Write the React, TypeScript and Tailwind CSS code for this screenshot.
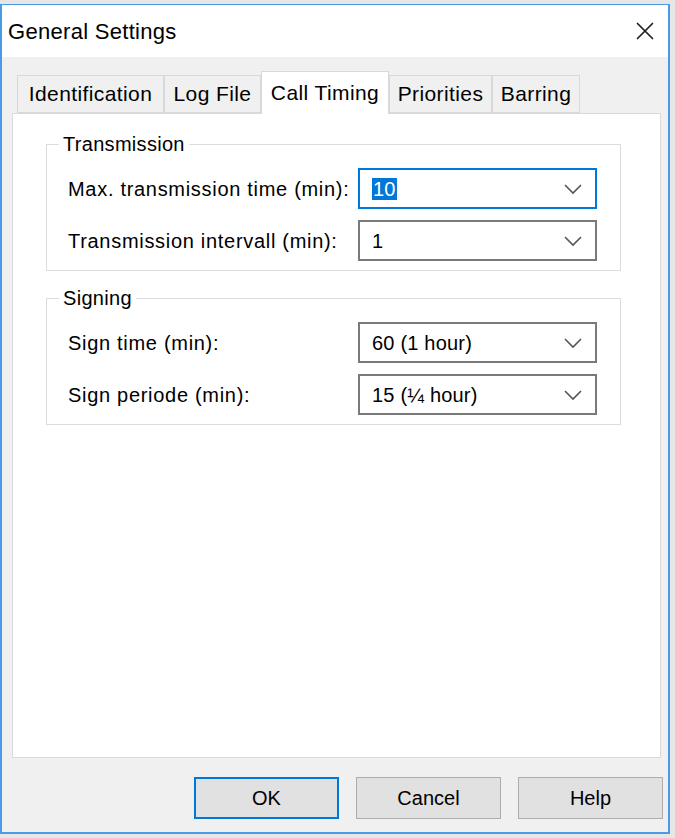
import { X } from 'lucide-react';

const font = { fontFamily: '"Liberation Sans", Arial, sans-serif' };

function Chevron() {
    return (
        <svg width="20" height="12" viewBox="0 0 20 12" className="shrink-0">
            <path d="M2 2 L10 10 L18 2" fill="none" stroke="#555" strokeWidth="1.6" />
        </svg>
    );
}

function Combo({ value, focused }: { value: string; focused?: boolean }) {
    return (
        <div
            className={
                focused
                    ? 'w-[239px] h-[41px] border-2 border-[#0078d7] bg-white flex items-center pl-[12px] pr-[12px]'
                    : 'w-[239px] h-[41px] border-2 border-[#7a7a7a] bg-white flex items-center pl-[12px] pr-[12px]'
            }
        >
            <span className="flex-1 text-[20px] tracking-[0.2px] text-black leading-none">
                {focused ? <span className="bg-[#0078d7] text-white px-[1px]">{value}</span> : value}
            </span>
            <Chevron />
        </div>
    );
}

function Row({ label, value, focused }: { label: string; value: string; focused?: boolean }) {
    return (
        <div className="flex items-center justify-between">
            <span className="text-[20px] tracking-[0.7px] text-black">{label}</span>
            <Combo value={value} focused={focused} />
        </div>
    );
}

function Group({ title, children }: { title: string; children: React.ReactNode }) {
    return (
        <div className="relative border border-[#dcdcdc] pl-[21px] pr-[23px] pt-[23px] pb-[9px] flex flex-col gap-[11px]">
            <span className="absolute -top-[12px] left-[12px] bg-white px-[4px] text-[20px] tracking-[0.3px] leading-[22px] text-black">
                {title}
            </span>
            {children}
        </div>
    );
}

const tabs = [
    { name: 'Identification', w: 'w-[147px]' },
    { name: 'Log File', w: 'w-[97px]' },
    { name: 'Call Timing', w: 'w-[128px]' },
    { name: 'Priorities', w: 'w-[103px]' },
    { name: 'Barring', w: 'w-[88px]' },
];

export default function App() {
    return (
        <div className="w-[675px] h-[838px] bg-[#e6e6e6] pt-[4px] pr-[5px] pb-[4px]" style={font}>
            <div className="h-full border-2 border-t border-[#4a9be6] flex flex-col bg-[#f0f0f0]">
                {/* title bar */}
                <div className="h-[52px] bg-white flex items-center justify-between pl-[6px] pr-[8px] shrink-0">
                    <span className="text-[22px] tracking-[0.3px] text-black">General Settings</span>
                    <X size={30} strokeWidth={1.4} className="text-[#222]" />
                </div>

                <div className="flex-1 flex flex-col pl-[10px] pr-[7px] pt-[14px]">
                    {/* tabs */}
                    <div className="flex items-end pl-[5px] h-[42px] relative z-10">
                        {tabs.map(t =>
                            t.name === 'Call Timing' ? (
                                <div
                                    key={t.name}
                                    className={`${t.w} h-[43px] -mb-[1px] bg-white border border-b-0 border-[#d9d9d9] flex justify-center items-start pt-[5px] text-[21px] tracking-[0.4px] text-black`}
                                >
                                    {t.name}
                                </div>
                            ) : (
                                <div
                                    key={t.name}
                                    className={`${t.w} h-[38px] bg-[#f0f0f0] border border-[#d9d9d9] flex justify-center items-center text-[21px] tracking-[0.4px] text-black`}
                                >
                                    {t.name}
                                </div>
                            )
                        )}
                    </div>

                    {/* panel */}
                    <div className="h-[645px] bg-white border border-[#d9d9d9] pl-[33px] pr-[39px] pt-[30px] flex flex-col gap-[27px]">
                        <Group title="Transmission">
                            <Row label="Max. transmission time (min):" value="10" focused />
                            <Row label="Transmission intervall (min):" value="1" />
                        </Group>
                        <Group title="Signing">
                            <Row label="Sign time (min):" value="60 (1 hour)" />
                            <Row label="Sign periode (min):" value="15 (¼ hour)" />
                        </Group>
                    </div>

                    {/* buttons */}
                    <div className="flex justify-end gap-[17px] pt-[19px] -mr-[2px]">
                        <button className="w-[145px] h-[42px] bg-[#e1e1e1] border-2 border-[#0078d7] text-[20px] text-black">OK</button>
                        <button className="w-[145px] h-[42px] bg-[#e1e1e1] border border-[#adadad] text-[20px] text-black">Cancel</button>
                        <button className="w-[145px] h-[42px] bg-[#e1e1e1] border border-[#adadad] text-[20px] text-black">Help</button>
                    </div>
                </div>
            </div>
        </div>
    );
}
